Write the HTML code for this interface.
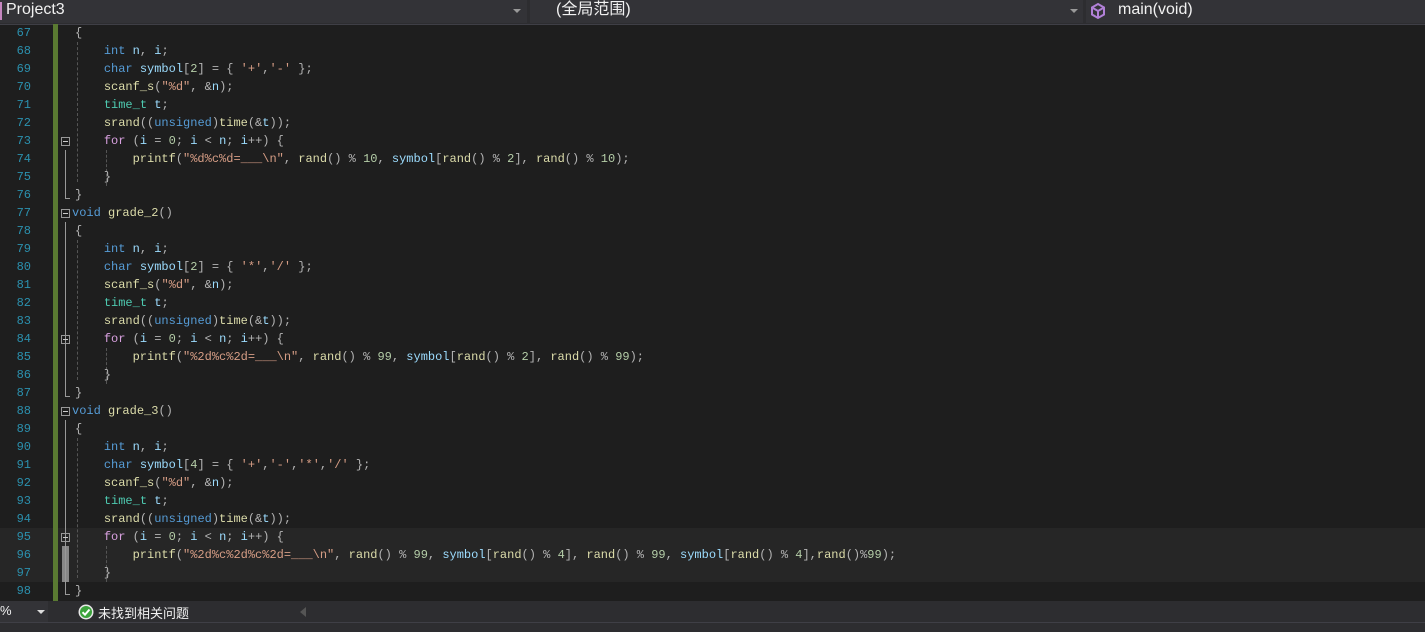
<!DOCTYPE html>
<html><head><meta charset="utf-8"><style>
body{margin:0;width:1425px;height:631px;background:#1e1e1e;overflow:hidden;position:relative;font-family:"Liberation Sans","Noto Sans CJK SC",sans-serif}
.hdr{position:absolute;left:0;top:0;width:1425px;height:24px;background:#2d2d30;border-bottom:1px solid #3f3f46}
.dd{position:absolute;top:0;height:23px;background:#333337;color:#f1f1f1;font-size:16px;line-height:19px}
.arr{position:absolute;top:9px;width:0;height:0;border-left:4px solid transparent;border-right:4px solid transparent;border-top:4px solid #999}
.ln{position:absolute;left:0;width:31px;text-align:right;color:#2b91af;font:12px/18px "Liberation Mono",monospace}
.cd{position:absolute;left:75px;white-space:pre;font:12px/18px "Liberation Mono",monospace;color:#dcdcdc}
.k{color:#569cd6}.t{color:#4ec9b0}.f{color:#dcdcaa}.v{color:#9cdcfe}.s{color:#d69d85}.p{color:#b4b4b4}.n{color:#b5cea8}.c{color:#d8a0df}
.fold{position:absolute;left:61px;width:9px;height:9px;border:1px solid #999;box-sizing:border-box;}
.fold:after{content:"";position:absolute;left:1px;top:3px;width:5px;height:1px;background:#ccc}
.guide{position:absolute;width:0;border-left:1px dashed #555}
.status{position:absolute;left:0;top:601px;width:1425px;height:21px;background:#2d2d30;color:#f1f1f1;font-size:13px}
</style></head><body>
<div class="hdr">
<div class="dd" style="left:0;width:527px"><span style="position:absolute;left:0;top:2px;width:2px;height:18px;background:#c586c0"></span><span style="position:absolute;left:6px;top:0">Project3</span><span class="arr" style="left:513px"></span></div>
<div class="dd" style="left:530px;width:553px"><span style="position:absolute;left:26px;top:0">(全局范围)</span><span class="arr" style="left:540px"></span></div>
<div class="dd" style="left:1086px;width:339px"><svg style="position:absolute;left:4px;top:2px" width="16" height="18" viewBox="0 0 16 18"><path d="M8 2 L14 5.5 L14 12.5 L8 16 L2 12.5 L2 5.5 Z M2 5.5 L8 9 L14 5.5 M8 9 L8 16" fill="none" stroke="#b180d7" stroke-width="2"/></svg><span style="position:absolute;left:32px;top:0">main(void)</span></div>
</div>
<div style="position:absolute;left:0;top:528px;width:1425px;height:54px;background:#262626"></div>
<div style="position:absolute;left:53px;top:24px;width:5px;height:577px;background:#5a7a32"></div>
<div style="position:absolute;left:62px;top:546px;width:7px;height:36px;background:#888"></div>
<div class="guide" style="left:77px;top:42px;height:140px"></div>
<div class="guide" style="left:106px;top:150px;height:36px"></div>
<div class="guide" style="left:77px;top:240px;height:140px"></div>
<div class="guide" style="left:106px;top:348px;height:36px"></div>
<div class="guide" style="left:77px;top:438px;height:140px"></div>
<div class="guide" style="left:106px;top:546px;height:36px"></div>
<div style="position:absolute;left:65px;top:150px;height:48px;width:4px;border-left:1px solid #999;border-bottom:1px solid #999"></div>
<div style="position:absolute;left:65px;top:222px;height:174px;width:4px;border-left:1px solid #999;border-bottom:1px solid #999"></div>
<div style="position:absolute;left:65px;top:420px;height:174px;width:4px;border-left:1px solid #999;border-bottom:1px solid #999"></div>
<div class="fold" style="top:137px"></div>
<div class="fold" style="top:209px"></div>
<div class="fold" style="top:335px"></div>
<div class="fold" style="top:407px"></div>
<div class="fold" style="top:533px"></div>

<div class="ln" style="top:24px">67<br>68<br>69<br>70<br>71<br>72<br>73<br>74<br>75<br>76<br>77<br>78<br>79<br>80<br>81<br>82<br>83<br>84<br>85<br>86<br>87<br>88<br>89<br>90<br>91<br>92<br>93<br>94<br>95<br>96<br>97<br>98</div>
<div class="cd" style="top:24px"><span class="p">{</span>
    <span class="k">int</span> <span class="v">n</span><span class="p">,</span> <span class="v">i</span><span class="p">;</span>
    <span class="k">char</span> <span class="v">symbol</span><span class="p">[</span><span class="n">2</span><span class="p">] = { </span><span class="s">'+'</span><span class="p">,</span><span class="s">'-'</span><span class="p"> };</span>
    <span class="f">scanf_s</span><span class="p">(</span><span class="s">"%d"</span><span class="p">, &amp;</span><span class="v">n</span><span class="p">);</span>
    <span class="t">time_t</span> <span class="v">t</span><span class="p">;</span>
    <span class="f">srand</span><span class="p">((</span><span class="k">unsigned</span><span class="p">)</span><span class="f">time</span><span class="p">(&amp;</span><span class="v">t</span><span class="p">));</span>
    <span class="c">for</span><span class="p"> (</span><span class="v">i</span><span class="p"> = </span><span class="n">0</span><span class="p">; </span><span class="v">i</span><span class="p"> &lt; </span><span class="v">n</span><span class="p">; </span><span class="v">i</span><span class="p">++) {</span>
        <span class="f">printf</span><span class="p">(</span><span class="s">"%d%c%d=___\n"</span><span class="p">, </span><span class="f">rand</span><span class="p">() % </span><span class="n">10</span><span class="p">, </span><span class="v">symbol</span><span class="p">[</span><span class="f">rand</span><span class="p">() % </span><span class="n">2</span><span class="p">], </span><span class="f">rand</span><span class="p">() % </span><span class="n">10</span><span class="p">);</span>
    <span class="p">}</span>
<span class="p">}</span>
<span class="k" style="margin-left:-3px">void</span> <span class="f">grade_2</span><span class="p">()</span>
<span class="p">{</span>
    <span class="k">int</span> <span class="v">n</span><span class="p">,</span> <span class="v">i</span><span class="p">;</span>
    <span class="k">char</span> <span class="v">symbol</span><span class="p">[</span><span class="n">2</span><span class="p">] = { </span><span class="s">'*'</span><span class="p">,</span><span class="s">'/'</span><span class="p"> };</span>
    <span class="f">scanf_s</span><span class="p">(</span><span class="s">"%d"</span><span class="p">, &amp;</span><span class="v">n</span><span class="p">);</span>
    <span class="t">time_t</span> <span class="v">t</span><span class="p">;</span>
    <span class="f">srand</span><span class="p">((</span><span class="k">unsigned</span><span class="p">)</span><span class="f">time</span><span class="p">(&amp;</span><span class="v">t</span><span class="p">));</span>
    <span class="c">for</span><span class="p"> (</span><span class="v">i</span><span class="p"> = </span><span class="n">0</span><span class="p">; </span><span class="v">i</span><span class="p"> &lt; </span><span class="v">n</span><span class="p">; </span><span class="v">i</span><span class="p">++) {</span>
        <span class="f">printf</span><span class="p">(</span><span class="s">"%2d%c%2d=___\n"</span><span class="p">, </span><span class="f">rand</span><span class="p">() % </span><span class="n">99</span><span class="p">, </span><span class="v">symbol</span><span class="p">[</span><span class="f">rand</span><span class="p">() % </span><span class="n">2</span><span class="p">], </span><span class="f">rand</span><span class="p">() % </span><span class="n">99</span><span class="p">);</span>
    <span class="p">}</span>
<span class="p">}</span>
<span class="k" style="margin-left:-3px">void</span> <span class="f">grade_3</span><span class="p">()</span>
<span class="p">{</span>
    <span class="k">int</span> <span class="v">n</span><span class="p">,</span> <span class="v">i</span><span class="p">;</span>
    <span class="k">char</span> <span class="v">symbol</span><span class="p">[</span><span class="n">4</span><span class="p">] = { </span><span class="s">'+'</span><span class="p">,</span><span class="s">'-'</span><span class="p">,</span><span class="s">'*'</span><span class="p">,</span><span class="s">'/'</span><span class="p"> };</span>
    <span class="f">scanf_s</span><span class="p">(</span><span class="s">"%d"</span><span class="p">, &amp;</span><span class="v">n</span><span class="p">);</span>
    <span class="t">time_t</span> <span class="v">t</span><span class="p">;</span>
    <span class="f">srand</span><span class="p">((</span><span class="k">unsigned</span><span class="p">)</span><span class="f">time</span><span class="p">(&amp;</span><span class="v">t</span><span class="p">));</span>
    <span class="c">for</span><span class="p"> (</span><span class="v">i</span><span class="p"> = </span><span class="n">0</span><span class="p">; </span><span class="v">i</span><span class="p"> &lt; </span><span class="v">n</span><span class="p">; </span><span class="v">i</span><span class="p">++) {</span>
        <span class="f">printf</span><span class="p">(</span><span class="s">"%2d%c%2d%c%2d=___\n"</span><span class="p">, </span><span class="f">rand</span><span class="p">() % </span><span class="n">99</span><span class="p">, </span><span class="v">symbol</span><span class="p">[</span><span class="f">rand</span><span class="p">() % </span><span class="n">4</span><span class="p">], </span><span class="f">rand</span><span class="p">() % </span><span class="n">99</span><span class="p">, </span><span class="v">symbol</span><span class="p">[</span><span class="f">rand</span><span class="p">() % </span><span class="n">4</span><span class="p">],</span><span class="f">rand</span><span class="p">()%</span><span class="n">99</span><span class="p">);</span>
    <span class="p">}</span>
<span class="p">}</span></div>

<div class="status">
<div style="position:absolute;left:0;top:0;width:48px;height:21px;background:#333337"><span style="position:absolute;left:0;top:2px">%</span><span class="arr" style="left:37px;top:9px;border-top-color:#ddd"></span></div>
<svg style="position:absolute;left:78px;top:3px" width="16" height="16" viewBox="0 0 16 16"><circle cx="8" cy="8" r="7.5" fill="#e8e8e8"/><circle cx="8" cy="8" r="6" fill="#3ca33c"/><path d="M4.5 8.2 L7 10.7 L11.5 5.5" fill="none" stroke="#fff" stroke-width="2"/></svg>
<span style="position:absolute;left:98px;top:2px">未找到相关问题</span>
<span style="position:absolute;left:300px;top:6px;width:0;height:0;border-top:5px solid transparent;border-bottom:5px solid transparent;border-right:6px solid #555"></span>
</div>
<div style="position:absolute;left:0;top:622px;width:1425px;height:9px;background:#2d2d30;border-top:1px solid #3f3f46"></div>
</body></html>
